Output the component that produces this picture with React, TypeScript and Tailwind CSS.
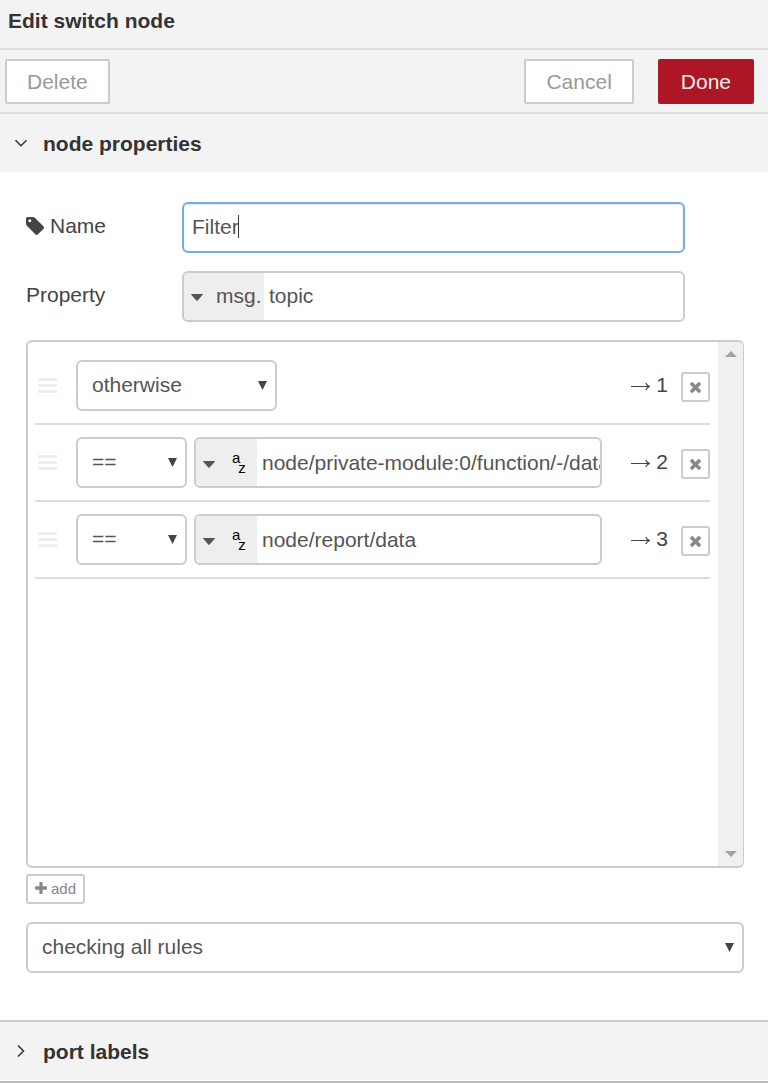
import React from "react";

type Rule = { output: number; operator: string; value?: string };

const rules: Rule[] = [
  { output: 1, operator: "otherwise" },
  { output: 2, operator: "==", value: "node/private-module:0/function/-/data" },
  { output: 3, operator: "==", value: "node/report/data" },
];

function TagIcon() {
  return (
    <svg viewBox="0 128 1516 1516" className="h-[18px] w-[18px] shrink-0 fill-current" aria-hidden="true">
      <path d="M448 448q0-53-37.5-90.5t-90.5-37.5-90.5 37.5-37.5 90.5 37.5 90.5 90.5 37.5 90.5-37.5 37.5-90.5zm1067 576q0 53-37 90l-491 492q-39 37-91 37-53 0-90-37l-715-716q-38-37-64.5-101t-26.5-117v-416q0-52 38-90t90-38h416q53 0 117 26.5t102 64.5l715 714q37 39 37 91z" />
    </svg>
  );
}

function TimesIcon() {
  return (
    <svg viewBox="302 238 1188 1188" className="h-[11px] w-[11px] fill-current" aria-hidden="true">
      <path d="M1490 1194q0 40-28 68l-136 136q-28 28-68 28t-68-28l-294-294-294 294q-28 28-68 28t-68-28l-136-136q-28-28-28-68t28-68l294-294-294-294q-28-28-28-68t28-68l136-136q28-28 68-28t68 28l294 294 294-294q28-28 68-28t68 28l136 136q28 28 28 68t-28 68l-294 294 294 294q28 28 28 68z" />
    </svg>
  );
}

function PlusIcon() {
  return (
    <svg viewBox="192 128 1408 1408" className="h-3 w-3 fill-current" aria-hidden="true">
      <path d="M1600 736v192q0 40-28 68t-68 28h-416v416q0 40-28 68t-68 28h-192q-40 0-68-28t-28-68v-416h-416q-40 0-68-28t-28-68v-192q0-40 28-68t68-28h416v-416q0-40 28-68t68-28h192q40 0 68 28t28 68v416h416q40 0 68 28t28 68z" />
    </svg>
  );
}

function CaretIcon() {
  return (
    <svg viewBox="0 0 12 7" className="mt-[3px] h-[7px] w-3 shrink-0 fill-[#555]" aria-hidden="true">
      <path d="M0 .5Q0 0 .6 0h10.8q.6 0 .6.5L6.4 6.7q-.4.3-.8 0z" />
    </svg>
  );
}

function ArrowIcon() {
  return (
    <svg
      viewBox="0 0 20 9"
      className="mt-[3px] h-[9px] w-5 shrink-0 fill-none stroke-current stroke-[1.2]"
      role="img"
      aria-label="output"
    >
      <path d="M1 4.5h18.5M15.8 1q1 2.6 3.8 3.5-2.8.9-3.8 3.5" />
    </svg>
  );
}

function Chevron({ open }: { open: boolean }) {
  return (
    <svg viewBox="0 0 14 14" className="h-[14px] w-[14px] fill-none stroke-[#333] stroke-[1.5]" aria-hidden="true">
      <path d={open ? "M1.5 4.2 7 9.7l5.5-5.5" : "M4 1.5 9.5 7 4 12.5"} />
    </svg>
  );
}

function Select({ label, value, className }: { label: string; value: string; className: string }) {
  return (
    <div className={`relative ${className}`}>
      <select
        aria-label={label}
        defaultValue={value}
        className="block h-[51px] w-full appearance-none rounded-md border-2 border-[#ccc] bg-white pr-7 pb-0.5 pl-[14px] text-[#555] outline-none"
      >
        <option>{value}</option>
      </select>
      <svg
        viewBox="0 0 9 9"
        className="pointer-events-none absolute top-[21px] right-[10px] h-[9px] w-[9px] fill-[#444]"
        aria-hidden="true"
      >
        <path d="M0 0h9L4.5 9z" />
      </svg>
    </div>
  );
}

function RuleRow({ rule }: { rule: Rule }) {
  return (
    <li className="flex h-[77px] items-center border-b-2 border-[#ddd] pl-[3px]">
      <span className="mr-[19px] flex w-[19px] shrink-0 flex-col gap-[3px]" aria-hidden="true">
        <span className="h-[3px] bg-[#eee]" />
        <span className="h-[3px] bg-[#eee]" />
        <span className="h-[3px] bg-[#eee]" />
      </span>
      {rule.value === undefined ? (
        <Select label="Operator" value={rule.operator} className="w-[201px]" />
      ) : (
        <>
          <Select label="Operator" value={rule.operator} className="mr-[7px] w-[111px] shrink-0" />
          <div className="flex h-[51px] min-w-0 flex-1 overflow-hidden rounded-md border-2 border-[#ccc] bg-white">
            <button type="button" aria-label="Value type: string" className="flex w-[61px] shrink-0 items-center gap-[17px] bg-[#eee] pl-[7px]">
              <CaretIcon />
              <span className="flex text-[15px] leading-[15px] text-black">
                <span className="pb-[10px]">a</span>
                <span className="-ml-0.5 pt-[10px]">z</span>
              </span>
            </button>
            <input
              aria-label="Value"
              defaultValue={rule.value}
              className="min-w-0 flex-1 bg-transparent pb-px pl-[5px] text-[#555] outline-none"
            />
          </div>
        </>
      )}
      <span className="ml-auto flex w-[66px] shrink-0 items-center justify-end gap-[6px] pb-0.5">
        <ArrowIcon />
        {rule.output}
      </span>
      <button
        type="button"
        aria-label={`Remove rule ${rule.output}`}
        className="mt-[3px] ml-[13px] flex h-[30px] w-[29px] shrink-0 items-center justify-center rounded-[3px] border-2 border-[#ccc] bg-white text-[#888]"
      >
        <TimesIcon />
      </button>
    </li>
  );
}

function SectionHeader({ title, open }: { title: string; open: boolean }) {
  return (
    <h2>
      <button
        type="button"
        aria-expanded={open}
        className="flex h-[58px] w-full items-center gap-[15px] bg-[#f3f3f3] pl-[14px] text-left font-bold text-[#333]"
      >
        <Chevron open={open} />
        {title}
      </button>
    </h2>
  );
}

export default function App() {
  return (
    <div className="bg-white font-['Liberation_Sans',Arial,sans-serif] text-[21px] leading-[25px] text-[#444]">
      <header className="flex h-[50px] items-center border-b-2 border-[#ddd] bg-[#f3f3f3] pb-2 pl-2">
        <h1 className="font-bold text-[#333]">Edit switch node</h1>
      </header>
      <div className="flex h-16 items-center border-b-2 border-[#ddd] bg-[#f3f3f3] pr-[14px] pl-[5px]">
        <button type="button" className="h-[45px] rounded-xs border-2 border-[#ccc] bg-white px-5 text-[#999]">
          Delete
        </button>
        <button type="button" className="mr-6 ml-auto h-[45px] rounded-xs border-2 border-[#ccc] bg-white px-5 text-[#999]">
          Cancel
        </button>
        <button type="button" className="h-[45px] rounded-xs bg-[#ad1625] px-[23px] text-[#eee]">
          Done
        </button>
      </div>

      <SectionHeader title="node properties" open />
      <form className="pt-[30px] pr-6 pb-[47px] pl-[26px]">
        <div className="mb-[18px] flex items-center">
          <label htmlFor="node-name" className="flex w-[156px] items-center gap-[6px] pb-1">
            <TagIcon />
            Name
          </label>
          <div className="relative w-[70%]">
            <input
              id="node-name"
              defaultValue="Filter"
              className="block h-[51px] w-full rounded-md border-2 border-[#78aaeb] bg-white px-2 pb-0.5 text-[#555] caret-transparent shadow-[inset_0_1px_2px_rgba(0,0,0,0.1)] outline-none"
            />
            <span className="absolute top-[13px] left-[56px] h-[23px] w-px bg-[#333]" aria-hidden="true" />
          </div>
        </div>

        <div className="mb-[18px] flex items-center">
          <label htmlFor="node-property" className="w-[156px] pb-1">
            Property
          </label>
          <div className="flex h-[51px] w-[70%] overflow-hidden rounded-md border-2 border-[#ccc] bg-white">
            <button type="button" className="flex w-20 shrink-0 items-center gap-[13px] bg-[#eee] pb-0.5 pl-[7px] text-[#555]">
              <CaretIcon />
              msg.
            </button>
            <input
              id="node-property"
              defaultValue="topic"
              className="min-w-0 flex-1 bg-transparent pb-0.5 pl-[5px] text-[#555] outline-none"
            />
          </div>
        </div>

        <div className="flex h-[528px] overflow-hidden rounded-md border-2 border-r border-[#ccc]">
          <ol className="min-w-0 flex-1 pt-[6px] pr-2 pl-[7px]">
            {rules.map((rule) => (
              <RuleRow key={rule.output} rule={rule} />
            ))}
          </ol>
          <div className="flex w-[25px] shrink-0 flex-col items-center justify-between bg-[#f0f0f0] py-[9px]" aria-hidden="true">
            <svg viewBox="0 0 12 6" className="h-[6px] w-3 fill-[#a3a3a3]">
              <path d="M0 6h12L6 0z" />
            </svg>
            <svg viewBox="0 0 12 6" className="h-[6px] w-3 fill-[#a3a3a3]">
              <path d="M0 0h12L6 6z" />
            </svg>
          </div>
        </div>

        <button
          type="button"
          className="mt-[6px] mb-[18px] flex h-[30px] items-center gap-1 rounded-[3px] border-2 border-[#ccc] bg-white px-[7px] pb-0.5 text-[15px] text-[#888]"
        >
          <PlusIcon />
          add
        </button>

        <Select label="Rule evaluation" value="checking all rules" className="w-full" />
      </form>

      <div className="border-t-2 border-[#ccc]">
        <SectionHeader title="port labels" open={false} />
      </div>
      <div className="mt-px border-t-2 border-[#bbb]" />
    </div>
  );
}
